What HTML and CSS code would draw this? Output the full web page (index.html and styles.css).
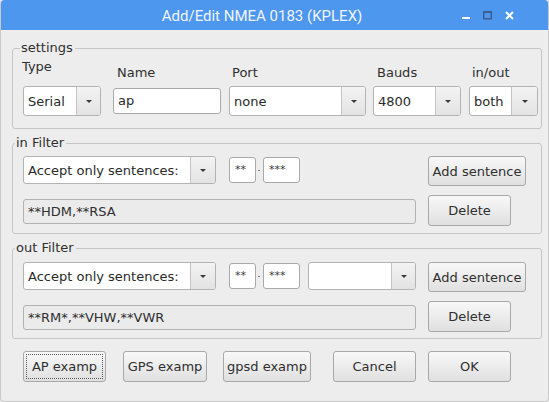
FILE: index.html
```html
<!DOCTYPE html>
<html>
<head>
<meta charset="utf-8">
<link rel="stylesheet" href="styles.css">
</head>
<body>
<div class="window">
  <div class="titlebar">
    <div class="title">Add/Edit NMEA 0183 (KPLEX)</div>
    <div class="controls">
      <svg class="ctl" width="10" height="10" viewBox="0 0 10 10"><rect x="1" y="6" width="8" height="2" fill="#ffffff"/></svg>
      <svg class="ctl" width="10" height="10" viewBox="0 0 10 10"><rect x="0.75" y="0.75" width="7.5" height="7" fill="none" stroke="#3c5f92" stroke-width="1.5"/><rect x="0" y="0" width="9" height="2" fill="#3c5f92"/></svg>
      <svg class="ctl" width="10" height="10" viewBox="0 0 10 10"><path d="M1 1 L8 8 M8 1 L1 8" stroke="#ffffff" stroke-width="2" fill="none"/></svg>
    </div>
  </div>
  <div class="content">
    <fieldset class="group settings">
      <legend class="legend legend-settings">settings</legend>
      <div class="settings-row">
        <div class="col col-type">
          <span class="label label-type">Type</span>
          <div class="combo w-type"><span class="combo-text">Serial</span><span class="combo-btn"><span class="arrow"></span></span></div>
        </div>
        <div class="col col-name">
          <span class="label">Name</span>
          <div class="lineedit w-name">ap</div>
        </div>
        <div class="col col-port">
          <span class="label">Port</span>
          <div class="combo w-port"><span class="combo-text">none</span><span class="combo-btn"><span class="arrow"></span></span></div>
        </div>
        <div class="col col-baud">
          <span class="label">Bauds</span>
          <div class="combo w-baud"><span class="combo-text">4800</span><span class="combo-btn"><span class="arrow"></span></span></div>
        </div>
        <div class="col col-io">
          <span class="label">in/out</span>
          <div class="combo w-io"><span class="combo-text">both</span><span class="combo-btn"><span class="arrow"></span></span></div>
        </div>
      </div>
    </fieldset>

    <fieldset class="group filter filter-in">
      <legend class="legend">in Filter</legend>
      <div class="filter-grid">
        <div class="filter-row">
          <div class="combo small w-accept"><span class="combo-text">Accept only sentences:</span><span class="combo-btn"><span class="arrow"></span></span></div>
          <div class="box box2">**</div>
          <span class="dash"></span>
          <div class="box box3">***</div>
        </div>
        <button class="btn btn-add">Add sentence</button>
        <div class="listfield">**HDM,**RSA</div>
        <button class="btn btn-del">Delete</button>
      </div>
    </fieldset>

    <fieldset class="group filter filter-out">
      <legend class="legend">out Filter</legend>
      <div class="filter-grid">
        <div class="filter-row">
          <div class="combo small w-accept"><span class="combo-text">Accept only sentences:</span><span class="combo-btn"><span class="arrow"></span></span></div>
          <div class="box box2">**</div>
          <span class="dash"></span>
          <div class="box box3">***</div>
          <div class="combo small w-extra"><span class="combo-text"></span><span class="combo-btn"><span class="arrow"></span></span></div>
        </div>
        <button class="btn btn-add">Add sentence</button>
        <div class="listfield">**RM*,**VHW,**VWR</div>
        <button class="btn btn-del">Delete</button>
      </div>
    </fieldset>

    <div class="bottom-row">
      <button class="btn b-ap focused"><span class="focus">AP examp</span></button>
      <button class="btn b-gps">GPS examp</button>
      <button class="btn b-gpsd">gpsd examp</button>
      <button class="btn b-cancel">Cancel</button>
      <button class="btn b-ok">OK</button>
    </div>
  </div>
</div>
</body>
</html>
```

FILE: styles.css
```css
* { box-sizing: border-box; }
html, body {
  margin: 0;
  padding: 0;
  background: #ededed;
}
body {
  width: 549px;
  height: 402px;
  overflow: hidden;
  font-family: "DejaVu Sans", sans-serif;
  font-size: 13px;
  color: #2f2f2f;
}
.window {
  width: 549px;
  height: 402px;
  background: #ededed;
  border: 1px solid #c9c9c9;
  border-top: none;
  border-radius: 4px;
  overflow: hidden;
}
.titlebar {
  height: 30px;
  margin: 0 -1px;
  background: #4e97ef;
  border-radius: 4px 4px 0 0;
  display: flex;
  align-items: center;
  position: relative;
}
.title {
  flex: 1;
  text-align: center;
  font-family: Roboto, "Noto Sans", sans-serif;
  font-size: 15px;
  color: #eef4fd;
  padding-right: 25px;
  padding-top: 1px;
}
.controls {
  position: absolute;
  right: 34px;
  top: 11px;
  display: flex;
  gap: 12px;
}
.ctl { display: block; }

.content {
  padding: 10px 0 0 11px;
  display: flex;
  flex-direction: column;
}
.group {
  margin: 0;
  width: 530px;
  border: 1px solid #c6c6c6;
  border-radius: 3px;
  padding: 0 0 0 10px;
  min-width: 0;
}
.legend {
  padding: 0 2px 0 1px;
  margin-left: -8px;
  line-height: 16px;
  height: 16px;
  color: #2f2f2f;
}
.legend-settings { margin-left: -3px; }

.settings { padding-top: 3px; padding-bottom: 12px; }
.settings-row {
  display: flex;
  align-items: flex-end;
}
.col {
  display: flex;
  flex-direction: column;
}
.label {
  line-height: 16px;
  height: 16px;
  margin-bottom: 5px;
  padding-left: 4px;
}
.label-type { margin-bottom: 11px; padding-left: 0; margin-left: -1px; }
.col-name { margin-left: 12px; }
.col-name .label { padding-left: 4px; margin-bottom: 7px; }
.col-port { margin-left: 8px; }
.col-port .label { padding-left: 3px; }
.col-baud { margin-left: 7px; }
.col-baud .label { padding-left: 4px; }
.col-io { margin-left: 8px; }
.col-io .label { padding-left: 3px; }

.combo {
  height: 30px;
  display: flex;
  background: #ffffff;
  border: 1px solid #b3b3b3;
  border-radius: 3px;
  overflow: hidden;
}
.combo.small { height: 28px; }
.combo-text {
  flex: 1;
  padding-left: 4px;
  display: flex;
  align-items: center;
  white-space: nowrap;
  color: #2a2a2a;
}
.combo-btn {
  width: 24px;
  border-left: 1px solid #c4c4c4;
  background: linear-gradient(#f3f3f3, #e3e3e3);
  display: flex;
  align-items: center;
  justify-content: center;
}
.arrow {
  width: 0;
  height: 0;
  border-left: 3px solid transparent;
  border-right: 3px solid transparent;
  border-top: 3px solid #3a3a3a;
  margin-top: 1px;
}
.w-type { width: 78px; }
.w-port { width: 137px; }
.w-baud { width: 88px; }
.w-baud .combo-btn { width: 25px; }
.w-io { width: 69px; }
.w-io .combo-btn { width: 26px; }

.lineedit {
  width: 108px;
  height: 26px;
  margin-bottom: 2px;
  background: #ffffff;
  border: 1px solid #a9a9a9;
  border-radius: 3px;
  padding-left: 4px;
  line-height: 24px;
  color: #2a2a2a;
}

.filter { padding-top: 5px; padding-bottom: 7px; }
.filter-in { margin-top: 6px; }
.filter-out { margin-top: 6px; padding-top: 6px; padding-bottom: 6px; }
.filter-grid {
  display: grid;
  grid-template-columns: 393px 98px;
  column-gap: 12px;
  row-gap: 9px;
  align-items: center;
}
.filter-row {
  display: flex;
  align-items: flex-start;
  height: 30px;
}
.w-accept { width: 193px; }
.w-accept .combo-btn { width: 25px; }
.box {
  height: 26px;
  margin-top: 1px;
  background: #ffffff;
  border: 1px solid #a9a9a9;
  border-radius: 3px;
  font-size: 11px;
  line-height: 24px;
  padding-left: 5px;
  color: #3a3a3a;
}
.box2 { width: 27px; margin-left: 13px; }
.box3 { width: 37px; }
.dash {
  width: 7px;
  height: 30px;
  position: relative;
}
.dash::after {
  content: "";
  position: absolute;
  left: 2px;
  top: 14px;
  width: 2px;
  height: 1px;
  background: #777777;
}
.w-extra { width: 108px; margin-left: 8px; }

.btn {
  font-family: "DejaVu Sans", sans-serif;
  font-size: 13px;
  color: #2f2f2f;
  background: linear-gradient(#f8f8f8, #e0e0e0);
  border: 1px solid #a8a8a8;
  border-radius: 3px;
  padding: 0;
  margin: 0;
  display: flex;
  align-items: center;
  justify-content: center;
}
.btn-add { width: 98px; height: 30px; justify-self: start; }
.btn-del { width: 83px; height: 31px; justify-self: start; }
.listfield {
  height: 25px;
  margin-top: 1px;
  background: #ebebeb;
  border: 1px solid #b2b2b2;
  border-radius: 3px;
  padding-left: 4px;
  line-height: 23px;
  color: #2f2f2f;
}

.bottom-row {
  display: flex;
  margin-top: 12px;
  padding-left: 11px;
}
.bottom-row .btn { height: 31px; }
.b-ap { width: 83px; position: relative; }
.b-gps { width: 84px; margin-left: 17px; }
.b-gpsd { width: 88px; margin-left: 16px; }
.b-cancel { width: 83px; margin-left: 22px; }
.b-ok { width: 83px; margin-left: 12px; }
.focus {
  display: flex;
  align-items: center;
  justify-content: center;
  width: 77px;
  height: 25px;
  border: 1px dotted #555555;
}
```
